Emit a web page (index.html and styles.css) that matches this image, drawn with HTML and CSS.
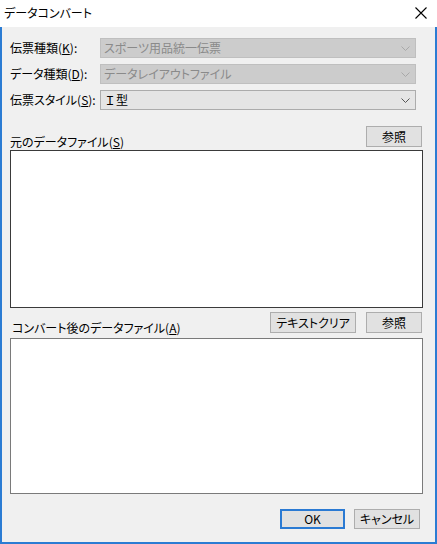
FILE: index.html
```html
<!DOCTYPE html>
<html lang="ja">
<head>
<meta charset="utf-8">
<title>データコンバート</title>
<link rel="stylesheet" href="styles.css">
</head>
<body>
<div class="window">
  <div class="titlebar">
    <span class="title">データコンバート</span>
    <svg class="close" width="12" height="12" viewBox="0 0 12 12"><path d="M0.5 0.5 L11.5 11.5 M11.5 0.5 L0.5 11.5" stroke="#000" stroke-width="1.1" fill="none"/></svg>
  </div>
  <div class="body">
    <div class="fields">
      <label class="flabel">伝票種類(<u>K</u>):</label>
      <div class="combo disabled"><span>スポーツ用品統一伝票</span><svg class="chev" width="9" height="5" viewBox="0 0 9 5"><polyline points="0.5,0.5 4.5,4.5 8.5,0.5" fill="none" stroke="#a8a8a8" stroke-width="1"/></svg></div>
      <label class="flabel">データ種類(<u>D</u>):</label>
      <div class="combo disabled"><span>データレイアウトファイル</span><svg class="chev" width="9" height="5" viewBox="0 0 9 5"><polyline points="0.5,0.5 4.5,4.5 8.5,0.5" fill="none" stroke="#a8a8a8" stroke-width="1"/></svg></div>
      <label class="flabel">伝票スタイル(<u>S</u>):</label>
      <div class="combo"><span class="fullwidth">Ｉ型</span><svg class="chev" width="9" height="5" viewBox="0 0 9 5"><polyline points="0.5,0.5 4.5,4.5 8.5,0.5" fill="none" stroke="#555" stroke-width="1"/></svg></div>
    </div>

    <div class="sec-head first">
      <span class="sec-label">元のデータファイル(<u>S</u>)</span>
      <div class="btns">
        <button class="btn ref">参照</button>
      </div>
    </div>
    <div class="textbox dark box1"></div>

    <div class="sec-head second">
      <span class="sec-label indent">コンバート後のデータファイル(<u>A</u>)</span>
      <div class="btns">
        <button class="btn clear">テキストクリア</button>
        <button class="btn ref">参照</button>
      </div>
    </div>
    <div class="textbox box2"></div>

    <div class="footer">
      <button class="btn ok">OK</button>
      <button class="btn cancel">キャンセル</button>
    </div>
  </div>
</div>
</body>
</html>
```

FILE: styles.css
```css
html, body {
  margin: 0;
  padding: 0;
}
body {
  font-family: "Noto Sans CJK JP", "Noto Sans", sans-serif;
  font-size: 12px;
  font-feature-settings: "palt";
  color: #000;
}
.window {
  width: 437px;
  height: 544px;
  display: flex;
  flex-direction: column;
  box-sizing: border-box;
}
.titlebar {
  height: 27px;
  flex: none;
  background: #fff;
  display: flex;
  align-items: center;
  justify-content: space-between;
  padding: 0 10px 0 4px;
  box-sizing: border-box;
}
.title {
  font-size: 12px;
  line-height: 14px;
  margin-top: -1px;
}
.close {
  display: block;
  margin-top: -1px;
}
.body {
  flex: 1;
  background: #f0f0f0;
  border: solid #2b7cd3;
  border-width: 0 2px 2px 2px;
  padding: 11px 12px 0 8px;
  display: flex;
  flex-direction: column;
}
.fields {
  display: grid;
  grid-template-columns: 90px 316px;
  grid-auto-rows: 20px;
  row-gap: 6px;
}
.flabel {
  display: flex;
  align-items: center;
  line-height: 14px;
}
.combo {
  box-sizing: border-box;
  border: 1px solid #acacac;
  background: #e5e5e5;
  display: flex;
  align-items: center;
  justify-content: space-between;
  padding: 0 5px 0 3px;
  line-height: 14px;
}
.combo.disabled {
  background: #cccccc;
  border-color: #bfbfbf;
  color: #8a8a8a;
}
.fullwidth {
  font-feature-settings: normal;
}
.chev {
  display: block;
}
.sec-head {
  display: flex;
  align-items: flex-end;
  justify-content: space-between;
  height: 21px;
  padding-right: 1px;
}
.sec-head.first {
  margin-top: 16px;
}
.sec-head.second {
  margin-top: 4px;
}
.sec-label {
  line-height: 14px;
  margin-bottom: -2px;
}
.sec-label.indent {
  margin-left: 2px;
}
.btns {
  display: flex;
  gap: 10px;
}
.btn {
  font-family: inherit;
  font-size: 12px;
  font-feature-settings: "palt";
  background: #e1e1e1;
  border: 1px solid #adadad;
  height: 21px;
  padding: 0;
  margin: 0;
  line-height: 14px;
  color: #000;
  box-sizing: border-box;
}
.btn.ref {
  width: 56px;
}
.btn.clear {
  width: 86px;
}
.textbox {
  background: #fff;
  border: 1px solid #7a7a7a;
  box-sizing: border-box;
}
.textbox.dark {
  border-color: #3a3a3a;
}
.box1 {
  margin-top: 3px;
  height: 158px;
}
.box2 {
  margin-top: 5px;
  height: 156px;
}
.footer {
  display: flex;
  justify-content: flex-end;
  gap: 9px;
  margin-top: 15px;
  padding-right: 3px;
}
.btn.ok {
  width: 65px;
  height: 20px;
  border: 2px solid #2a7ad3;
}
.btn.cancel {
  width: 66px;
  height: 20px;
}
```
